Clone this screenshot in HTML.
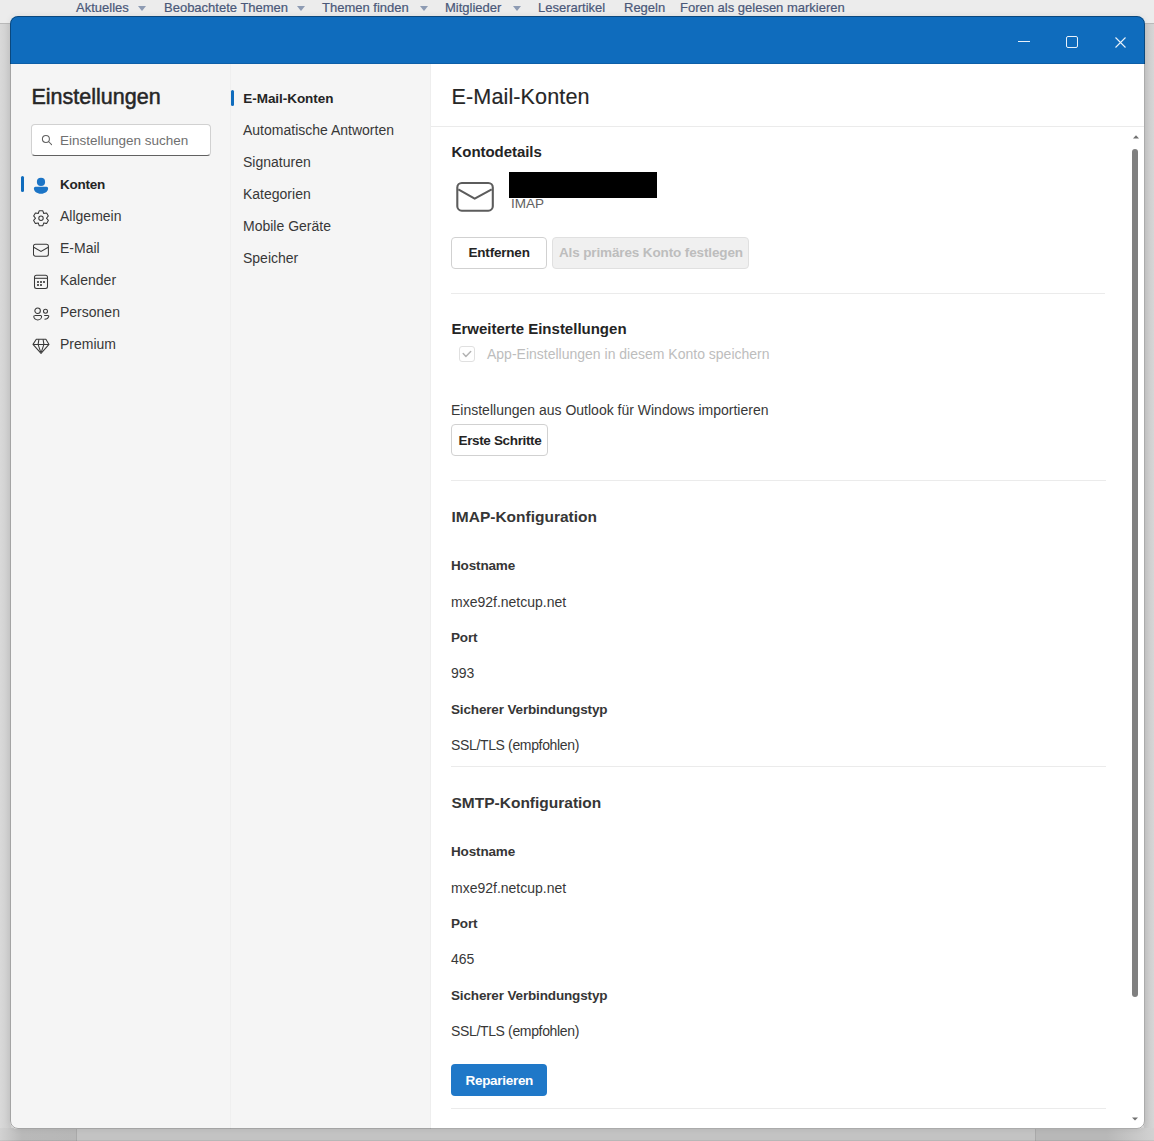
<!DOCTYPE html>
<html><head><meta charset="utf-8">
<style>
*{box-sizing:border-box;margin:0;padding:0}
html,body{width:1154px;height:1141px;overflow:hidden}
body{position:relative;font-family:"Liberation Sans",sans-serif;background:#d6d6d6;color:#242424}
.a{position:absolute;white-space:nowrap;line-height:1}
#topstrip{position:absolute;left:0;top:0;width:1154px;height:23px;background:#ececec}
#topline{position:absolute;left:0;top:23px;width:1154px;height:1px;background:#b9b9b9}
.nav{font-size:13px;color:#4a5879;top:1px;-webkit-text-stroke:0.2px #4a5879}
.tri{position:absolute;top:6px;width:0;height:0;border-left:4px solid transparent;border-right:4px solid transparent;border-top:5px solid #8d9bb3}
#win{position:absolute;left:10px;top:16px;width:1135px;height:1113px;border-radius:8px;overflow:hidden;background:#fff;box-shadow:0 0 6px rgba(0,0,0,0.08)}
#winb{position:absolute;left:10px;top:16px;width:1135px;height:1113px;border-radius:8px;border:1px solid rgba(0,0,0,0.33)}
#in{position:absolute;left:-10px;top:-16px;width:1154px;height:1141px}
.r{position:absolute}
.t14{font-size:14px}
.b{font-weight:bold}
.hr{position:absolute;height:1px;background:#ebebeb}
.btn{position:absolute;border:1px solid #d1d1d1;border-radius:4px;background:#fff}
.nl{font-size:14px;color:#383838}
.lbl{font-size:13.5px;font-weight:bold;color:#363636;letter-spacing:-0.15px}
.val{font-size:14px;color:#383838}
svg{position:absolute;overflow:visible}
</style></head><body>
<div class="r" style="left:0;top:24px;width:11px;height:1105px;background:linear-gradient(90deg,#d9d9d9,#cbcbcb)"></div>
<div class="r" style="left:1144px;top:24px;width:10px;height:1105px;background:linear-gradient(90deg,#c6c6c6,#d6d6d6)"></div>
<div class="r" style="left:0;top:1128px;width:76px;height:13px;background:linear-gradient(90deg,#d2d2d2,#b9b9b9 22px,#b7b7b7)"></div>
<div class="r" style="left:76px;top:1128px;width:1px;height:13px;background:#a9a9a9"></div>
<div class="r" style="left:77px;top:1128px;width:958px;height:13px;background:#c3c3c3"></div>
<div class="r" style="left:1035px;top:1128px;width:1px;height:13px;background:#a9a9a9"></div>
<div class="r" style="left:1036px;top:1128px;width:118px;height:13px;background:linear-gradient(90deg,#b8b8b8,#b8b8b8 60%,#d2d2d2)"></div>
<div class="r" style="left:0;top:1140px;width:1154px;height:1px;background:rgba(0,0,0,0.06)"></div>
<div id="topstrip"></div>
<div id="topline"></div>
<div class="a nav" style="left:76px">Aktuelles</div><div class="tri" style="left:138px"></div>
<div class="a nav" style="left:164px">Beobachtete Themen</div><div class="tri" style="left:297px"></div>
<div class="a nav" style="left:322px">Themen finden</div><div class="tri" style="left:420px"></div>
<div class="a nav" style="left:445px">Mitglieder</div><div class="tri" style="left:513px"></div>
<div class="a nav" style="left:538px">Leserartikel</div>
<div class="a nav" style="left:624px">Regeln</div>
<div class="a nav" style="left:680px">Foren als gelesen markieren</div>

<div id="win"><div id="in">
 <!-- title bar -->
 <div class="r" style="left:0;top:0;width:1154px;height:64px;background:#0f6cbd;border-bottom:1px solid #0d5fa8"></div>
 <div class="r" style="left:1018px;top:41px;width:12px;height:1px;background:#e8f1fa"></div>
 <div class="r" style="left:1066px;top:36px;width:12px;height:12px;border:1px solid #e8f1fa;border-radius:2px"></div>
 <svg style="left:1115px;top:37px" width="11" height="11" viewBox="0 0 11 11"><path d="M0.5 0.5L10.5 10.5M10.5 0.5L0.5 10.5" stroke="#e8f1fa" stroke-width="1.1"/></svg>

 <!-- sidebar -->
 <div class="r" style="left:0;top:64px;width:230px;height:1080px;background:#f5f5f5"></div>
 <div class="r" style="left:230px;top:64px;width:1px;height:1080px;background:#efefef"></div>
 <div class="r" style="left:231px;top:64px;width:199px;height:1080px;background:#f5f5f5"></div>
 <div class="r" style="left:430px;top:64px;width:1px;height:1080px;background:#eeeeee"></div>

 <div class="a" style="left:31.5px;top:86.5px;font-size:21.5px;color:#262626;-webkit-text-stroke:0.5px #262626">Einstellungen</div>
 <div class="r" style="left:31px;top:124px;width:180px;height:32px;background:#fff;border:1px solid #d1d1d1;border-bottom-color:#616161;border-radius:4px"></div>
 <svg style="left:36px;top:128px" width="20" height="20" viewBox="0 0 20 20"><circle cx="9.9" cy="10.9" r="3.5" fill="none" stroke="#616161" stroke-width="1.05"/><path d="M12.5 13.5L15.6 16.6" stroke="#616161" stroke-width="1.05" stroke-linecap="round"/></svg>
 <div class="a" style="left:60px;top:133.6px;font-size:13.5px;color:#707070">Einstellungen suchen</div>

 <div class="r" style="left:21px;top:176px;width:3px;height:16px;background:#0f6cbd;border-radius:2px"></div>
 <svg style="left:31px;top:176px" width="20" height="20" viewBox="0 0 20 20"><circle cx="10" cy="5.95" r="4.1" fill="#1b74c6"/><path fill="#1b74c6" d="M4.3 10.8h11.3a1.5 1.5 0 0 1 1.5 1.5v.3c0 2.9-3.1 5.25-7.1 5.25s-7.1-2.35-7.1-5.25v-.3a1.5 1.5 0 0 1 1.5-1.5Z"/></svg>
 <div class="a b" style="left:60px;top:177.6px;font-size:13.5px;letter-spacing:-0.25px;color:#242424">Konten</div>
 <svg style="left:31px;top:207.5px" width="20" height="20" viewBox="0 0 20 20"><path fill="none" stroke="#383838" stroke-width="1.05" stroke-linejoin="round" d="M12.54 4.76L11.73 2.70L8.27 2.70L7.46 4.76Q7.50 5.87 6.56 5.29L4.37 4.95L2.64 7.95L4.02 9.68Q5.00 10.20 4.02 10.72L2.64 12.45L4.37 15.45L6.56 15.11Q7.50 14.53 7.46 15.64L8.27 17.70L11.73 17.70L12.54 15.64Q12.50 14.53 13.44 15.11L15.63 15.45L17.36 12.45L15.98 10.72Q15.00 10.20 15.98 9.68L17.36 7.95L15.63 4.95L13.44 5.29Q12.50 5.87 12.54 4.76Z"/><circle cx="10" cy="10.2" r="2.2" fill="none" stroke="#383838" stroke-width="1.05"/></svg>
 <div class="a nl" style="left:60px;top:209px">Allgemein</div>
 <svg style="left:31px;top:240px" width="20" height="20" viewBox="0 0 20 20"><rect x="2.5" y="4.3" width="14.9" height="12" rx="2" fill="none" stroke="#383838" stroke-width="1.05"/><path d="M2.7 7.25L10 11.4L17.3 7.25" fill="none" stroke="#383838" stroke-width="1.05"/></svg>
 <div class="a nl" style="left:60px;top:241px">E-Mail</div>
 <svg style="left:31px;top:272px" width="20" height="20" viewBox="0 0 20 20"><rect x="3.5" y="3.3" width="13" height="13.2" rx="2" fill="none" stroke="#383838" stroke-width="1.05"/><path d="M3.5 6.3H16.5" stroke="#383838" stroke-width="1.05"/><g fill="#383838"><rect x="6.1" y="9.1" width="1.8" height="1.8"/><rect x="9.1" y="9.1" width="1.8" height="1.8"/><rect x="12.1" y="9.1" width="1.8" height="1.8"/><rect x="6.1" y="12.1" width="1.8" height="1.8"/><rect x="9.1" y="12.1" width="1.8" height="1.8"/></g></svg>
 <div class="a nl" style="left:60px;top:273px">Kalender</div>
 <svg style="left:31px;top:304px" width="20" height="20" viewBox="0 0 20 20"><g fill="none" stroke="#383838" stroke-width="1.05"><circle cx="6.6" cy="6.8" r="2.75"/><circle cx="14.5" cy="7.3" r="2"/><path d="M3.7 11.4h5.9a1 1 0 0 1 1 1c0 2-1.8 3.5-3.9 3.5s-3.9-1.5-3.9-3.5a1 1 0 0 1 1-1Z"/><path d="M13.2 11.4h3.7a.9.9 0 0 1 .8 1.2c-.5 1.6-2 2.6-4.2 2.7"/></g></svg>
 <div class="a nl" style="left:60px;top:305px">Personen</div>
 <svg style="left:31px;top:336px" width="20" height="20" viewBox="0 0 20 20"><g fill="none" stroke="#383838" stroke-width="1.05" stroke-linejoin="round"><path d="M5.3 3.3H14.9L18 8.4L10 17.4L2 8.4Z"/><path d="M2 8.4H18M7.9 3.4L7.1 8.4L9.6 15.8M12.1 3.4L12.9 8.4L10.4 15.8"/></g></svg>
 <div class="a nl" style="left:60px;top:337px">Premium</div>

 <!-- middle nav -->
 <div class="r" style="left:231px;top:90px;width:3px;height:16px;background:#0f6cbd;border-radius:2px"></div>
 <div class="a b" style="left:243.3px;top:91.6px;font-size:13.5px;letter-spacing:-0.05px;color:#242424">E-Mail-Konten</div>
 <div class="a nl" style="left:243px;top:123px">Automatische Antworten</div>
 <div class="a nl" style="left:243px;top:155px">Signaturen</div>
 <div class="a nl" style="left:243px;top:187px">Kategorien</div>
 <div class="a nl" style="left:243px;top:219px">Mobile Geräte</div>
 <div class="a nl" style="left:243px;top:251px">Speicher</div>

 <!-- content -->
 <div class="a" style="left:451.5px;top:86.4px;font-size:21.6px;color:#262626;letter-spacing:0.1px;-webkit-text-stroke:0.15px #262626">E-Mail-Konten</div>
 <div class="hr" style="left:431px;top:126px;width:713px"></div>
 <div class="a b" style="left:451.5px;top:143.8px;font-size:15px;letter-spacing:-0.05px;color:#242424">Kontodetails</div>
 <svg style="left:450px;top:174px" width="50" height="45" viewBox="0 0 50 45"><rect x="7.3" y="9" width="35.5" height="27.7" rx="4.5" fill="none" stroke="#5c5c5c" stroke-width="2.1"/><path d="M8.3 15.4L24.7 24.6L41.7 15.4" fill="none" stroke="#5c5c5c" stroke-width="2.1" stroke-linejoin="round"/></svg>
 <div class="a" style="left:511px;top:196.5px;font-size:13.5px;color:#616161">IMAP</div>
 <div class="r" style="left:509px;top:172px;width:148px;height:26px;background:#000"></div>

 <div class="btn" style="left:451px;top:237px;width:96px;height:32px"></div>
 <div class="a b" style="left:468.5px;top:246.4px;font-size:13.5px;letter-spacing:-0.2px;color:#242424">Entfernen</div>
 <div class="btn" style="left:552px;top:237px;width:197px;height:32px;background:#f0f0f0;border-color:#e0e0e0"></div>
 <div class="a b" style="left:559px;top:246.4px;font-size:13.5px;letter-spacing:-0.13px;color:#bdbdbd">Als primäres Konto festlegen</div>
 <div class="hr" style="left:451px;top:293px;width:654px"></div>

 <div class="a b" style="left:451.5px;top:320.9px;font-size:15px;color:#242424">Erweiterte Einstellungen</div>
 <div class="r" style="left:459px;top:346px;width:16px;height:16px;border:1px solid #e0e0e0;border-radius:3px;background:#fff"></div>
 <svg style="left:459px;top:346px" width="16" height="16" viewBox="0 0 16 16"><path d="M4.2 7.6L6.9 10.5L11.7 5.5" fill="none" stroke="#b4b4b4" stroke-width="1.5" stroke-linecap="round" stroke-linejoin="round"/></svg>
 <div class="a" style="left:487px;top:346.5px;font-size:14px;color:#bdbdbd">App-Einstellungen in diesem Konto speichern</div>

 <div class="a" style="left:451px;top:402.6px;font-size:14px;color:#383838">Einstellungen aus Outlook für Windows importieren</div>
 <div class="btn" style="left:451px;top:424px;width:97px;height:32px"></div>
 <div class="a b" style="left:458.5px;top:433.8px;font-size:13.5px;letter-spacing:-0.35px;color:#242424">Erste Schritte</div>
 <div class="hr" style="left:451px;top:480px;width:655px"></div>

 <div class="a b" style="left:451.5px;top:509px;font-size:15.5px;color:#363636">IMAP-Konfiguration</div>
 <div class="a lbl" style="left:451px;top:559px">Hostname</div>
 <div class="a val" style="left:451px;top:594.5px">mxe92f.netcup.net</div>
 <div class="a lbl" style="left:451px;top:630.5px">Port</div>
 <div class="a val" style="left:451px;top:666.1px">993</div>
 <div class="a lbl" style="left:451px;top:702.5px">Sicherer Verbindungstyp</div>
 <div class="a val" style="left:451px;top:738.1px;letter-spacing:-0.35px">SSL/TLS (empfohlen)</div>
 <div class="hr" style="left:451px;top:766px;width:655px"></div>

 <div class="a b" style="left:451.5px;top:794.6px;font-size:15.5px;color:#363636">SMTP-Konfiguration</div>
 <div class="a lbl" style="left:451px;top:844.6px">Hostname</div>
 <div class="a val" style="left:451px;top:880.5px">mxe92f.netcup.net</div>
 <div class="a lbl" style="left:451px;top:916.5px">Port</div>
 <div class="a val" style="left:451px;top:952.1px">465</div>
 <div class="a lbl" style="left:451px;top:988.5px">Sicherer Verbindungstyp</div>
 <div class="a val" style="left:451px;top:1024.1px;letter-spacing:-0.35px">SSL/TLS (empfohlen)</div>

 <div class="r" style="left:451px;top:1064px;width:96px;height:32px;background:#1f78c8;border-radius:4px"></div>
 <div class="a b" style="left:465.5px;top:1073.5px;font-size:13.5px;letter-spacing:-0.3px;color:#fff">Reparieren</div>
 <div class="hr" style="left:451px;top:1108px;width:655px"></div>

 <!-- scrollbar -->
 <svg style="left:1132.5px;top:134.5px" width="6" height="4" viewBox="0 0 6 4"><path d="M0 3.6L3 0.2L6 3.6Z" fill="#707070"/></svg>
 <div class="r" style="left:1132px;top:149px;width:6px;height:848px;background:#808080;border-radius:3px"></div>
 <svg style="left:1132px;top:1116.5px" width="6" height="4" viewBox="0 0 6 4"><path d="M0 0.4L3 3.6L6 0.4Z" fill="#707070"/></svg>
</div></div>
<div id="winb"></div>
</body></html>
